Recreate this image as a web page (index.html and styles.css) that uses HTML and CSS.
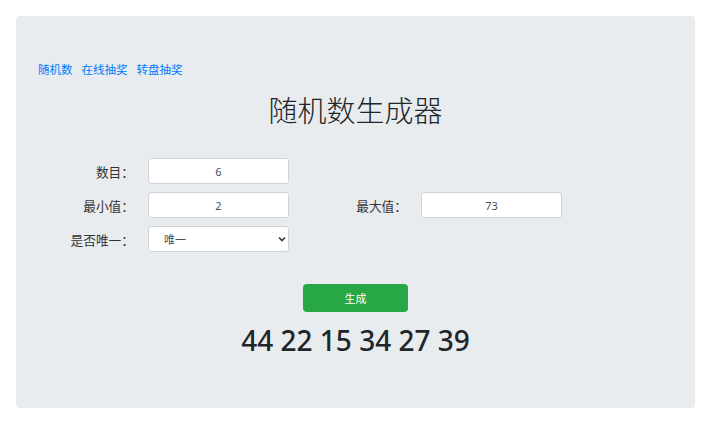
FILE: index.html
```html
<!DOCTYPE html>
<html lang="zh-CN">
  <head>
    <meta charset="UTF-8" />
    <meta name="viewport" content="width=device-width, initial-scale=1.0" />
    <title>随机数生成器</title>
    <link rel="stylesheet" href="styles.css">
  </head>
  <body>
    <div class="jumbotron">
      <nav class="links">
        <a href="#">随机数</a>
        <a href="#">在线抽奖</a>
        <a href="#">转盘抽奖</a>
      </nav>

      <h1 class="title">随机数生成器</h1>

      <div class="form">
        <label class="label">数目：</label>
        <input class="field" type="text" value="6" />
        <span></span>
        <span></span>

        <label class="label">最小值：</label>
        <input class="field" type="text" value="2" />
        <label class="label">最大值：</label>
        <input class="field" type="text" value="73" />

        <label class="label">是否唯一：</label>
        <div class="select-wrap">
          <select class="field select">
            <option>唯一</option>
            <option>不唯一</option>
          </select>
          <svg class="chevron" width="8" height="6" viewBox="0 0 8 6">
            <path d="M1 1.5 L4 4.5 L7 1.5" fill="none" stroke="#333" stroke-width="1.6" />
          </svg>
        </div>
      </div>

      <div class="actions">
        <button class="btn">生成</button>
      </div>

      <div class="result">44 22 15 34 27 39</div>
    </div>
  </body>
</html>
```

FILE: styles.css
```css
body {
  margin: 0;
  padding: 16px 25px 17px 16px;
  font-family: "Noto Sans", "Noto Sans CJK SC", sans-serif;
  color: #212529;
  background: #fff;
}

.jumbotron {
  background-color: #e9ecef;
  border-radius: 4px;
  height: 392px;
  box-sizing: border-box;
  padding-top: 46px;
}

.links {
  padding-left: 22px;
  font-size: 11.5px;
  line-height: 16px;
}

.links a {
  color: #007bff;
  text-decoration: none;
  margin-right: 6px;
}

.title {
  margin: 13px 0 0;
  text-align: center;
  font-size: 29px;
  font-weight: 300;
  line-height: 40px;
  color: #212529;
}

.form {
  margin-top: 27px;
  display: grid;
  grid-template-columns: 118px 141px 104px 141px;
  column-gap: 14px;
  row-gap: 8px;
  align-items: center;
}

.label {
  text-align: right;
  font-size: 12.7px;
  color: #333;
}

.field {
  box-sizing: border-box;
  width: 141px;
  height: 26px;
  border: 1px solid #ced4da;
  border-radius: 3px;
  background: #fff;
  font-family: "Noto Sans", "Noto Sans CJK SC", sans-serif;
  font-size: 11px;
  color: #495057;
  text-align: center;
  padding: 0 8px;
}

.select-wrap {
  position: relative;
  width: 141px;
}

.select {
  appearance: none;
  -webkit-appearance: none;
  text-align: left;
  padding-left: 15px;
}

.chevron {
  position: absolute;
  right: 3px;
  top: 10px;
}

.actions {
  margin-top: 32px;
  display: flex;
  justify-content: center;
}

.btn {
  width: 105px;
  height: 28px;
  background-color: #28a745;
  color: #fff;
  border: none;
  border-radius: 4px;
  font-family: "Noto Sans", "Noto Sans CJK SC", sans-serif;
  font-size: 11px;
  cursor: pointer;
}

.result {
  margin-top: 8px;
  text-align: center;
  font-size: 28px;
  font-weight: 500;
  line-height: 40px;
  color: #212529;
}
```
